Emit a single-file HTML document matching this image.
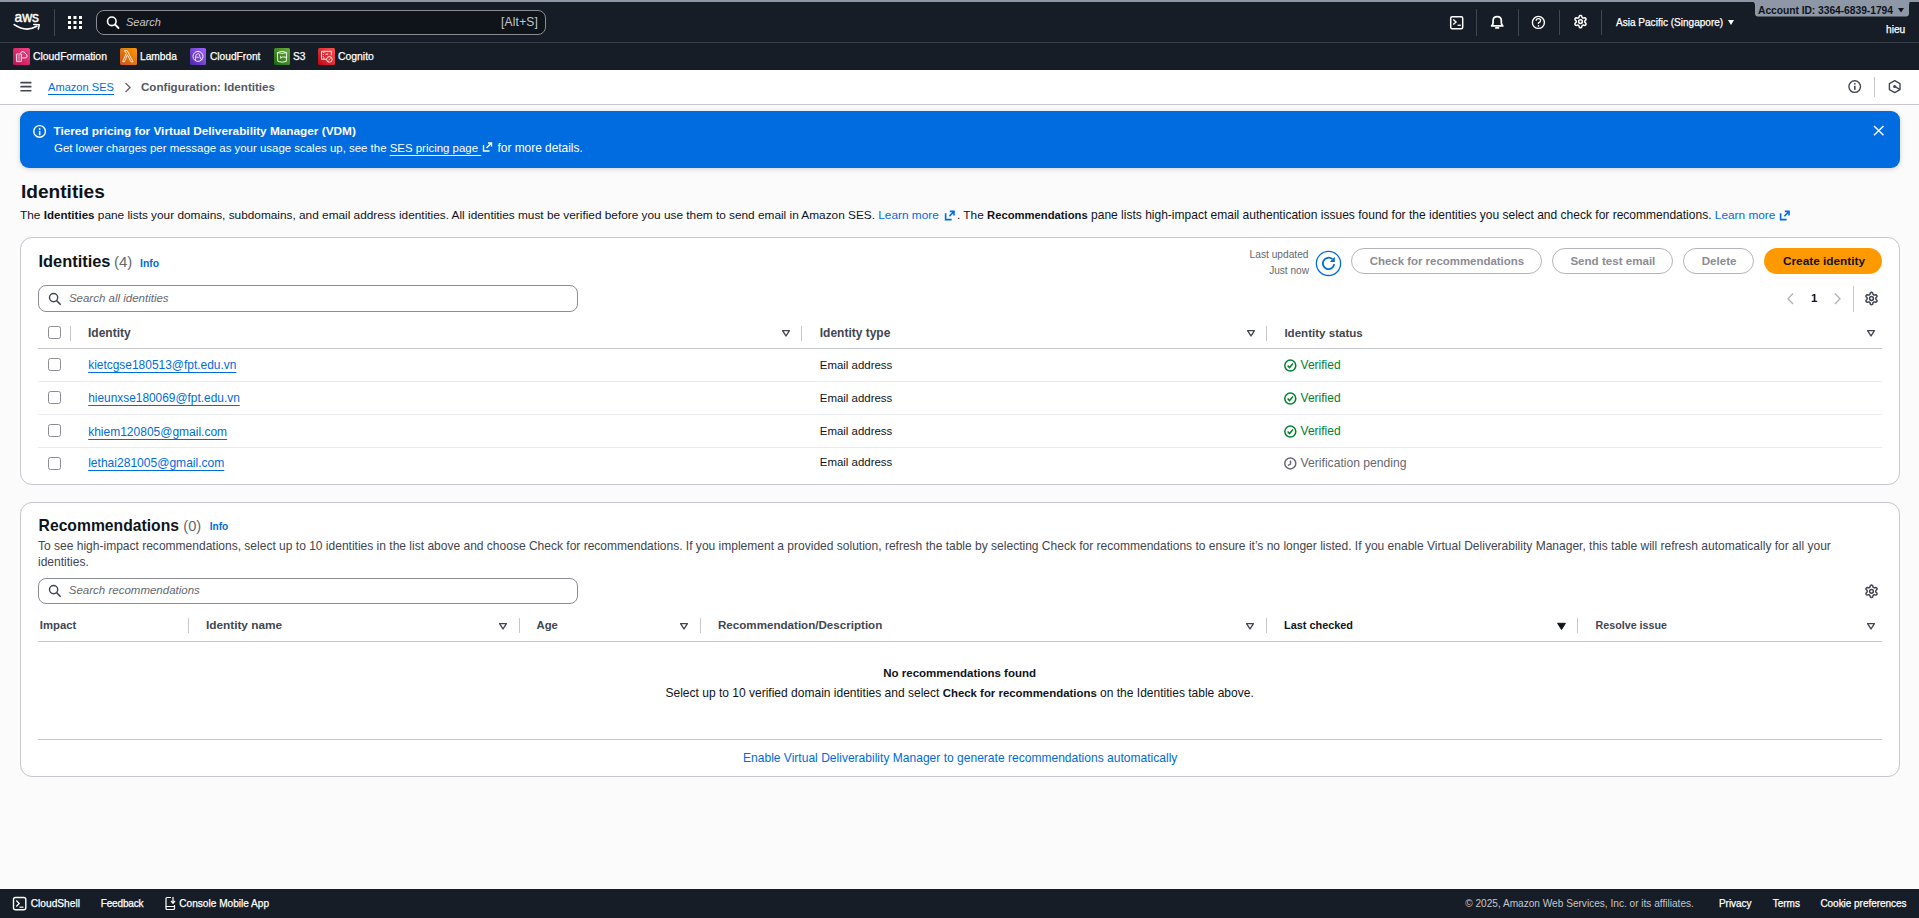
<!DOCTYPE html>
<html><head><meta charset="utf-8">
<style>
*{box-sizing:border-box;margin:0;padding:0}
html,body{width:1919px;height:918px;overflow:hidden}
body{font-family:"Liberation Sans",sans-serif;font-size:12px;color:#0f141a;background:#fbfbfc;position:relative}
.a{position:absolute;white-space:nowrap;line-height:1}
.lnk{color:#006ce0}
.u{text-decoration:underline;text-underline-offset:3px}
b{font-weight:bold}
svg{position:absolute;overflow:visible}
.wt{-webkit-text-stroke:0.25px #fff}
</style></head><body>

<svg style="left:0;top:0;width:0;height:0"><defs><g id="gear"><path d="M4.20 -0.00 L4.30 -0.45 L4.60 -0.98 L5.42 -1.76 L5.55 -2.47 L5.37 -3.10 L4.92 -3.57 L4.23 -3.81 L3.15 -3.50 L2.54 -3.49 L2.10 -3.64 L1.76 -3.95 L1.45 -4.48 L1.18 -5.57 L0.64 -6.05 L0.00 -6.20 L-0.64 -6.05 L-1.18 -5.57 L-1.45 -4.48 L-1.76 -3.95 L-2.10 -3.64 L-2.54 -3.49 L-3.15 -3.50 L-4.23 -3.81 L-4.92 -3.57 L-5.37 -3.10 L-5.55 -2.47 L-5.42 -1.76 L-4.60 -0.98 L-4.30 -0.45 L-4.20 -0.00 L-4.30 0.45 L-4.60 0.98 L-5.42 1.76 L-5.55 2.47 L-5.37 3.10 L-4.92 3.57 L-4.23 3.81 L-3.15 3.50 L-2.54 3.49 L-2.10 3.64 L-1.76 3.95 L-1.45 4.48 L-1.18 5.57 L-0.64 6.05 L-0.00 6.20 L0.64 6.05 L1.18 5.57 L1.45 4.48 L1.76 3.95 L2.10 3.64 L2.54 3.49 L3.15 3.50 L4.23 3.81 L4.92 3.57 L5.37 3.10 L5.55 2.47 L5.42 1.76 L4.60 0.98 L4.30 0.45 Z" stroke-width="1.5" fill="none" stroke-linejoin="round"/><circle cx="0" cy="0" r="1.9" stroke-width="1.5" fill="none"/></g></defs></svg>
<!-- top strip -->
<div class="a" style="left:0;top:0;width:1919px;height:2px;background:#8d97a5"></div>
<!-- header -->
<div class="a" style="left:0;top:2px;width:1919px;height:40px;background:#161d26"></div>
<div class="a" style="left:0;top:42px;width:1919px;height:1px;background:#3a414a"></div>
<div class="a" style="left:0;top:43px;width:1919px;height:27px;background:#161d26"></div>
<!-- breadcrumb bar -->
<div class="a" style="left:0;top:70px;width:1919px;height:34px;background:#ffffff"></div>
<div class="a" style="left:0;top:104px;width:1919px;height:1px;background:#c6c6cd"></div>


<!-- aws logo -->
<svg style="left:0;top:0" width="60" height="42">
<text x="14.5" y="22.3" font-family="Liberation Sans" font-size="15" fill="#fff" textLength="24.5" lengthAdjust="spacingAndGlyphs" stroke="#fff" stroke-width="0.45">aws</text>
<path d="M14.2 24.6 Q26 32.5 36.8 26.3" stroke="#fff" stroke-width="1.7" fill="none" stroke-linecap="round"/>
<path d="M33.8 24.6 L39.3 24.8 L38.3 29" stroke="#fff" stroke-width="1.5" fill="none" stroke-linecap="round" stroke-linejoin="round"/>
</svg>
<div class="a" style="left:54px;top:9px;width:1px;height:27px;background:#424650"></div>
<!-- grid -->
<svg style="left:0;top:0" width="90" height="42" fill="#fff">
<rect x="68" y="16" width="3" height="3"/><rect x="73.5" y="16" width="3" height="3"/><rect x="79" y="16" width="3" height="3"/>
<rect x="68" y="21" width="3" height="3"/><rect x="73.5" y="21" width="3" height="3"/><rect x="79" y="21" width="3" height="3"/>
<rect x="68" y="26" width="3" height="3"/><rect x="73.5" y="26" width="3" height="3"/><rect x="79" y="26" width="3" height="3"/>
</svg>
<!-- search -->
<div class="a" style="left:96px;top:10px;width:450px;height:25px;background:#0f141a;border:1px solid #8c8c94;border-radius:8px"></div>
<svg style="left:0;top:0" width="130" height="42"><circle cx="111.8" cy="21.3" r="4.3" stroke="#fff" stroke-width="1.6" fill="none"/><path d="M115 24.5 L118.5 28" stroke="#fff" stroke-width="1.8" stroke-linecap="round"/></svg>
<div class="a" style="left:126px;top:17px;font-size:11px;font-style:italic;color:#c6c6cd">Search</div>
<div class="a" style="left:501px;top:15.5px;font-size:12px;color:#c6c6cd;letter-spacing:0.2px">[Alt+S]</div>

<!-- right icons -->
<svg style="left:0;top:0" width="1919" height="42">
<rect x="1450.7" y="16.7" width="12" height="12" rx="1.5" stroke="#fff" stroke-width="1.5" fill="none"/>
<path d="M1453.3 19.6 L1456 22 L1453.3 24.4" stroke="#fff" stroke-width="1.4" fill="none"/>
<rect x="1457.6" y="24.6" width="3.2" height="1.3" fill="#fff"/>
<path d="M1491.6 25.9 L1502.8 25.9 Q1501.3 24.6 1501.3 22.4 L1501.3 20.6 Q1501.3 16.7 1497.2 16.7 Q1493.1 16.7 1493.1 20.6 L1493.1 22.4 Q1493.1 24.6 1491.6 25.9 Z" stroke="#fff" stroke-width="1.75" fill="none" stroke-linejoin="round"/>
<path d="M1495.9 27.9 L1498.5 27.9" stroke="#fff" stroke-width="1.8" stroke-linecap="round"/>
<circle cx="1538.4" cy="22.4" r="6" stroke="#fff" stroke-width="1.4" fill="none"/>
<path d="M1536.2 20.8 Q1536.2 18.7 1538.4 18.7 Q1540.6 18.7 1540.6 20.6 Q1540.6 22 1538.5 22.8 L1538.5 24" stroke="#fff" stroke-width="1.3" fill="none"/>
<circle cx="1538.5" cy="25.9" r="0.8" fill="#fff"/>
<use href="#gear" x="1580.5" y="21.6" stroke="#fff"/>
<rect x="1476" y="9" width="1" height="27" fill="#424650"/>
<rect x="1518" y="9" width="1" height="27" fill="#424650"/>
<rect x="1559" y="10" width="1" height="25" fill="#424650"/>
<rect x="1601" y="10" width="1" height="25" fill="#424650"/>
<path d="M1728 20 L1734 20 L1731 25 Z" fill="#fff"/>
</svg>
<div class="a wt" style="left:1616px;top:18px;font-size:10.05px;color:#fff">Asia Pacific (Singapore)</div>
<!-- account tab -->
<svg style="left:0;top:0" width="1919" height="20">
<path d="M1748 0 L1915 0 Q1909 0 1909 5 L1909 13.5 Q1909 16.5 1906 16.5 L1758 16.5 Q1755 16.5 1755 13.5 L1755 5 Q1755 1 1748 0 Z" fill="#8d97a5"/>
<path d="M1898 8 L1904 8 L1901 12.5 Z" fill="#0f141a"/>
</svg>
<div class="a" style="left:1758px;top:6px;font-size:10.3px;font-weight:bold;color:#0f141a;letter-spacing:-0.05px">Account ID: 3364-6839-1794</div>
<div class="a wt" style="left:1886px;top:25px;font-size:10.2px;color:#fff">hieu</div>

<!-- favorites -->
<svg style="left:0;top:0" width="400" height="70">
<defs>
<linearGradient id="gcf" x1="0" y1="1" x2="1" y2="0"><stop offset="0" stop-color="#bc1356"/><stop offset="1" stop-color="#f34482"/></linearGradient>
<linearGradient id="gla" x1="0" y1="1" x2="1" y2="0"><stop offset="0" stop-color="#c8511b"/><stop offset="1" stop-color="#ff9900"/></linearGradient>
<linearGradient id="gcr" x1="0" y1="1" x2="1" y2="0"><stop offset="0" stop-color="#4d27a8"/><stop offset="1" stop-color="#a166ff"/></linearGradient>
<linearGradient id="gs3" x1="0" y1="1" x2="1" y2="0"><stop offset="0" stop-color="#1b660f"/><stop offset="1" stop-color="#6cae3e"/></linearGradient>
<linearGradient id="gco" x1="0" y1="1" x2="1" y2="0"><stop offset="0" stop-color="#bd0816"/><stop offset="1" stop-color="#ff5252"/></linearGradient>
</defs>
<rect x="13" y="48" width="17" height="17" rx="1.5" fill="url(#gcf)"/>
<path d="M16.4 54 L21.6 54 L21.4 61.6 L16.6 61.6 Z" stroke="#fff" stroke-width="0.9" fill="none" opacity="0.9"/>
<path d="M17.5 56 L20.5 56 M17.5 58 L20.5 58 M17.5 60 L20.5 60" stroke="#fff" stroke-width="0.8" opacity="0.85"/>
<path d="M20.6 53.5 Q21 51.3 23 51.6 Q25 52.3 25.6 53.8 Q27.3 54.6 27 56.6 Q26.6 57.9 25.2 57.9 L21.7 57.9" stroke="#fff" stroke-width="0.9" fill="none"/>
<rect x="120" y="48" width="17" height="17" rx="1.5" fill="url(#gla)"/>
<path d="M124.6 50.6 L127.2 50.6 L133 61.8 L131 61.8 L127.4 54.8 L124.4 61.8 L122.6 61.8 L126.3 53.3 L125.3 51.4 L124.6 51.4 Z" stroke="#fff" stroke-width="0.8" fill="none" stroke-linejoin="round"/>
<rect x="190" y="48" width="16" height="17" rx="1.5" fill="url(#gcr)"/>
<circle cx="198" cy="56.4" r="5" stroke="#fff" stroke-width="1" fill="none" opacity="0.9"/>
<path d="M195.6 60.6 L195.6 56.3 Q196.2 53.6 198.3 53.6 Q200 54.2 199.6 56.2 L201.6 60.2 M195.6 56.8 L198.8 57.6" stroke="#fff" stroke-width="0.9" fill="none" opacity="0.9"/>
<rect x="274" y="48" width="16" height="17" rx="1.5" fill="url(#gs3)"/>
<path d="M277.4 52.6 Q282 50 286.6 52.6 L286.3 61.4 Q282 63 277.8 61.4 Z" stroke="#fff" stroke-width="0.9" fill="none" stroke-linejoin="round"/>
<path d="M277.4 52.6 Q282 54.4 286.6 52.6" stroke="#fff" stroke-width="0.8" fill="none"/>
<path d="M280.7 55.8 L280.7 58.3 L282.6 56.9 L287.2 57.4" stroke="#fff" stroke-width="0.9" fill="none"/>
<rect x="318" y="48" width="17" height="17" rx="1.5" fill="url(#gco)"/>
<path d="M326 59.3 L321.5 59.3 L321.5 51.3 L331.4 51.3 L331.4 55.2" stroke="#fff" stroke-width="0.9" fill="none"/>
<path d="M322.8 52.6 L324.5 52.6 M322.8 54.6 L323.8 54.6 M325.5 54.2 L328 54.2 M322.8 56.6 L323.8 56.6 M322.8 58.2 L324.8 58.2" stroke="#fff" stroke-width="0.8"/>
<circle cx="329.4" cy="59.4" r="2.8" stroke="#fff" stroke-width="0.9" fill="none"/>
<path d="M328.4 60.4 L330.4 58.4" stroke="#fff" stroke-width="0.8"/>
</svg>
<div class="a wt" style="left:33px;top:52px;font-size:10.4px;color:#fff">CloudFormation</div>
<div class="a wt" style="left:140px;top:52px;font-size:10.2px;color:#fff">Lambda</div>
<div class="a wt" style="left:210px;top:52px;font-size:10.2px;color:#fff">CloudFront</div>
<div class="a wt" style="left:293px;top:52px;font-size:10.2px;color:#fff">S3</div>
<div class="a wt" style="left:338px;top:52px;font-size:10.4px;color:#fff">Cognito</div>

<!-- breadcrumbs -->
<svg style="left:0;top:70px" width="300" height="34">
<rect x="20.3" y="11.7" width="11.2" height="1.7" rx="0.5" fill="#424650"/><rect x="20.3" y="15.7" width="11.2" height="1.7" rx="0.5" fill="#424650"/><rect x="20.3" y="19.9" width="11.2" height="1.7" rx="0.5" fill="#424650"/>
<path d="M125.5 13 L130 17.5 L125.5 22" stroke="#656871" stroke-width="1.4" fill="none"/>
</svg>
<div class="a lnk u" style="left:48px;top:81.7px;font-size:11.1px">Amazon SES</div>
<div class="a" style="left:141px;top:81px;font-size:11.6px;font-weight:bold;color:#545862">Configuration: Identities</div>


<!-- breadcrumb right icons -->
<svg style="left:0;top:0" width="1919" height="105">
<circle cx="1854.7" cy="86.6" r="5.8" stroke="#424650" stroke-width="1.4" fill="none"/>
<rect x="1854" y="85.8" width="1.6" height="4" fill="#424650"/><circle cx="1854.8" cy="83.8" r="0.9" fill="#424650"/>
<rect x="1874" y="77" width="1" height="20" fill="#c6c6cd"/>
<path d="M1894.7 80.6 L1900 83.6 L1900 89.6 L1894.7 92.6 L1889.4 89.6 L1889.4 83.6 Z" stroke="#424650" stroke-width="1.4" fill="none" stroke-linejoin="round"/>
<circle cx="1894.6" cy="86.4" r="1.5" fill="#424650"/><path d="M1894.6 86.4 L1899.8 89.4" stroke="#424650" stroke-width="1.3"/>
</svg>

<!-- flashbar -->
<div class="a" style="left:20px;top:111px;width:1880px;height:57px;background:#006ce0;border-radius:9px;box-shadow:0 1px 5px rgba(0,7,22,0.18)"></div>
<svg style="left:0;top:0" width="1919" height="170">
<circle cx="39.6" cy="131.4" r="5.8" stroke="#fff" stroke-width="1.4" fill="none"/>
<rect x="38.85" y="130.9" width="1.6" height="4.3" fill="#fff"/><circle cx="39.65" cy="129" r="0.9" fill="#fff"/>
<path d="M1874 126 L1883.5 135.3 M1883.5 126 L1874 135.3" stroke="#f2f3f3" stroke-width="1.6"/>
<path d="M483.5 145 L483.5 151 L489.5 151 M486.5 148 L491.5 143 M488 143 L491.5 143 L491.5 146.5" stroke="#fff" stroke-width="1.4" fill="none"/>
</svg>
<div class="a" style="left:53.4px;top:125.5px;font-size:11.8px;font-weight:bold;color:#fff">Tiered pricing for Virtual Deliverability Manager (VDM)</div>
<div class="a" style="left:54px;top:142.5px;font-size:11.45px;color:#fff">Get lower charges per message as your usage scales up, see the <span class="u">SES pricing page&nbsp;</span></div>
<div class="a" style="left:497.5px;top:142.5px;font-size:11.9px;color:#fff">for more details.</div>

<!-- page header -->
<div class="a" style="left:21px;top:182px;font-size:19.1px;font-weight:bold;color:#0f141a">Identities</div>
<div class="a" style="left:20px;top:209px;font-size:11.83px;color:#0f141a">The <b style="font-size:11.6px">Identities</b> pane lists your domains, subdomains, and email address identities. All identities must be verified before you use them to send email in Amazon SES. <span class="lnk">Learn more</span></div>
<div class="a" style="left:957px;top:209px;font-size:11.83px;color:#0f141a">. The <b style="font-size:11.26px">Recommendations</b><span style="font-size:12.02px"> pane lists high-impact email authentication issues found for the identities you select and check for recommendations. </span><span class="lnk">Learn more</span></div>
<svg style="left:0;top:0" width="1919" height="230">
<g id="ext" stroke="#006ce0" stroke-width="1.6" fill="none"><path d="M945.6 213.2 L945.6 219.6 L951.6 219.6"/><path d="M949.4 216.2 L953.8 211.6"/><path d="M949.8 211.4 L954 211.4 L954 215.6"/></g>
<use href="#ext" x="835"/>
</svg>

<!-- container 1 -->
<div class="a" style="left:20px;top:237px;width:1880px;height:248px;background:#fff;border:1px solid #c6c6cd;border-radius:12px"></div>
<div class="a" style="left:38.5px;top:253px;font-size:16.4px;font-weight:bold;color:#0f141a">Identities <span style="font-weight:normal;color:#656871;font-size:15px;margin-left:-1px">(4)</span></div>
<div class="a lnk" style="left:140px;top:258.5px;font-size:10.4px;font-weight:bold">Info</div>
<div class="a" style="left:1249.5px;top:249.5px;font-size:10.2px;color:#656871;text-align:right;width:59px">Last updated</div>
<div class="a" style="left:1249.5px;top:265.5px;font-size:10.1px;color:#656871;text-align:right;width:59.5px">Just now</div>

<svg style="left:0;top:0" width="1919" height="320">
<circle cx="1328.5" cy="263.4" r="12.1" stroke="#006ce0" stroke-width="1.3" fill="none"/>
<path d="M1334.2 264.2 A5.7 5.7 0 1 1 1332.4 259.2" stroke="#006ce0" stroke-width="1.8" fill="none"/>
<path d="M1334.8 256.8 L1334.8 261.9 L1329.8 261.9 Z" fill="#006ce0"/>
</svg>
<div class="a" style="left:1351px;top:248px;width:191px;height:26px;border:1px solid #b4b4bb;border-radius:14px"></div>
<div class="a" style="left:1369.7px;top:255.5px;font-size:11.44px;font-weight:bold;color:#8c8c94">Check for recommendations</div>
<div class="a" style="left:1552px;top:248px;width:121px;height:26px;border:1px solid #b4b4bb;border-radius:14px"></div>
<div class="a" style="left:1570.4px;top:255.5px;font-size:11.59px;font-weight:bold;color:#8c8c94">Send test email</div>
<div class="a" style="left:1683px;top:248px;width:71px;height:26px;border:1px solid #b4b4bb;border-radius:14px"></div>
<div class="a" style="left:1701.7px;top:254.8px;font-size:11.63px;font-weight:bold;color:#8c8c94">Delete</div>
<div class="a" style="left:1764px;top:248px;width:118px;height:26px;background:#ff9900;border-radius:14px"></div>
<div class="a" style="left:1783px;top:255.5px;font-size:11.81px;font-weight:bold;color:#0f141a">Create identity</div>

<div class="a" style="left:38px;top:285px;width:540px;height:27px;border:1px solid #8c8c94;border-radius:8px;background:#fff"></div>
<svg style="left:0;top:0" width="1919" height="360">
<circle cx="53.6" cy="297.6" r="4.1" stroke="#424650" stroke-width="1.4" fill="none"/><path d="M56.7 300.7 L60.2 304.2" stroke="#424650" stroke-width="1.6" stroke-linecap="round"/>
<path d="M1793 293.5 L1788 298.7 L1793 304" stroke="#b4b4bb" stroke-width="1.4" fill="none"/>
<path d="M1835 293.5 L1840 298.7 L1835 304" stroke="#b4b4bb" stroke-width="1.4" fill="none"/>
<rect x="1853" y="286" width="1" height="26" fill="#c6c6cd"/>
</svg>
<div class="a" style="left:68.9px;top:292.5px;font-size:11.5px;font-style:italic;color:#656871">Search all identities</div>
<div class="a" style="left:1811px;top:293px;font-size:11.5px;font-weight:bold;color:#0f141a">1</div>

<!-- table 1 -->
<div class="a" style="left:38px;top:348px;width:1844px;height:1px;background:#c6c6cd"></div>
<div class="a" style="left:38px;top:381px;width:1844px;height:1px;background:#ebebf0"></div>
<div class="a" style="left:38px;top:414px;width:1844px;height:1px;background:#ebebf0"></div>
<div class="a" style="left:38px;top:447px;width:1844px;height:1px;background:#ebebf0"></div>
<div class="a" style="left:48px;top:326px;width:13px;height:13px;border:1.2px solid #8c8c94;border-radius:2.5px"></div>
<div class="a" style="left:48px;top:358px;width:13px;height:13px;border:1.2px solid #8c8c94;border-radius:2.5px"></div>
<div class="a" style="left:48px;top:391px;width:13px;height:13px;border:1.2px solid #8c8c94;border-radius:2.5px"></div>
<div class="a" style="left:48px;top:424px;width:13px;height:13px;border:1.2px solid #8c8c94;border-radius:2.5px"></div>
<div class="a" style="left:48px;top:457px;width:13px;height:13px;border:1.2px solid #8c8c94;border-radius:2.5px"></div>
<svg style="left:0;top:0" width="1919" height="480">
<rect x="70" y="326" width="1" height="15" fill="#c6c6cd"/>
<rect x="801" y="326" width="1" height="15" fill="#c6c6cd"/>
<rect x="1266" y="326" width="1" height="15" fill="#c6c6cd"/>
<path d="M782.6 330.6 L789.4 330.6 L786 336 Z" stroke="#424650" stroke-width="1.4" fill="none" stroke-linejoin="round"/>
<path d="M1247.6 330.6 L1254.4 330.6 L1251 336 Z" stroke="#424650" stroke-width="1.4" fill="none" stroke-linejoin="round"/>
<path d="M1867.6 330.6 L1874.4 330.6 L1871 336 Z" stroke="#424650" stroke-width="1.4" fill="none" stroke-linejoin="round"/>
<g id="chk" stroke="#00802f" stroke-width="1.5" fill="none"><circle cx="1290.3" cy="365.6" r="5.5"/><path d="M1287.6 365.6 L1289.5 367.6 L1293 363.6"/></g>
<use href="#chk" y="33"/><use href="#chk" y="66"/>
<circle cx="1290.3" cy="463.4" r="5.5" stroke="#656871" stroke-width="1.5" fill="none"/><path d="M1290.5 460.4 L1290.5 464 L1287.8 465.5" stroke="#656871" stroke-width="1.4" fill="none"/>
</svg>
<div class="a" style="left:88px;top:327.3px;font-size:12px;font-weight:bold;color:#424650">Identity</div>
<div class="a" style="left:819.8px;top:328px;font-size:11.97px;font-weight:bold;color:#424650">Identity type</div>
<div class="a" style="left:1284.4px;top:328px;font-size:11.57px;font-weight:bold;color:#424650">Identity status</div>

<div class="a lnk u" style="left:88.2px;top:359.5px;font-size:11.95px">kietcgse180513@fpt.edu.vn</div>
<div class="a lnk u" style="left:88.2px;top:392.5px;font-size:11.9px">hieunxse180069@fpt.edu.vn</div>
<div class="a lnk u" style="left:88.2px;top:425.5px;font-size:12px">khiem120805@gmail.com</div>
<div class="a lnk u" style="left:88.2px;top:456.7px;font-size:12.05px">lethai281005@gmail.com</div>
<div class="a" style="left:819.8px;top:359.5px;font-size:11.44px">Email address</div>
<div class="a" style="left:819.8px;top:392.5px;font-size:11.44px">Email address</div>
<div class="a" style="left:819.8px;top:425.5px;font-size:11.44px">Email address</div>
<div class="a" style="left:819.8px;top:457px;font-size:11.44px">Email address</div>
<div class="a" style="left:1300.6px;top:358.8px;font-size:12px;color:#00802f">Verified</div>
<div class="a" style="left:1300.6px;top:391.8px;font-size:12px;color:#00802f">Verified</div>
<div class="a" style="left:1300.6px;top:424.8px;font-size:12px;color:#00802f">Verified</div>
<div class="a" style="left:1300.6px;top:456.8px;font-size:12.15px;color:#656871">Verification pending</div>

<!-- container 2 -->
<div class="a" style="left:20px;top:502px;width:1880px;height:275px;background:#fff;border:1px solid #c6c6cd;border-radius:12px"></div>
<div class="a" style="left:38.6px;top:517.5px;font-size:15.7px;font-weight:bold;color:#0f141a">Recommendations <span style="font-weight:normal;color:#656871;font-size:14.7px">(0)</span></div>
<div class="a lnk" style="left:209.7px;top:522px;font-size:10.1px;font-weight:bold">Info</div>
<div class="a" style="left:38px;top:538px;font-size:12.025px;color:#424650;white-space:normal;width:1820px;line-height:16px">To see high-impact recommendations, select up to 10 identities in the list above and choose Check for recommendations. If you implement a provided solution, refresh the table by selecting Check for recommendations to ensure it’s no longer listed. If you enable Virtual Deliverability Manager, this table will refresh automatically for all your identities.</div>
<div class="a" style="left:38px;top:578px;width:540px;height:26px;border:1px solid #8c8c94;border-radius:8px;background:#fff"></div>
<svg style="left:0;top:0" width="1919" height="780">
<circle cx="53.6" cy="589.6" r="4.1" stroke="#424650" stroke-width="1.4" fill="none"/><path d="M56.7 592.7 L60.2 596.2" stroke="#424650" stroke-width="1.6" stroke-linecap="round"/>
<rect x="188" y="618" width="1" height="15" fill="#c6c6cd"/>
<rect x="519" y="618" width="1" height="15" fill="#c6c6cd"/>
<rect x="700" y="618" width="1" height="15" fill="#c6c6cd"/>
<rect x="1266" y="618" width="1" height="15" fill="#c6c6cd"/>
<rect x="1577" y="618" width="1" height="15" fill="#c6c6cd"/>
<path d="M499.6 623.6 L506.4 623.6 L503 629 Z" stroke="#424650" stroke-width="1.4" fill="none" stroke-linejoin="round"/>
<path d="M680.6 623.6 L687.4 623.6 L684 629 Z" stroke="#424650" stroke-width="1.4" fill="none" stroke-linejoin="round"/>
<path d="M1246.6 623.6 L1253.4 623.6 L1250 629 Z" stroke="#424650" stroke-width="1.4" fill="none" stroke-linejoin="round"/>
<path d="M1557.6 623.3 L1565.4 623.3 L1561.5 629.5 Z" stroke="#0f141a" stroke-width="1" fill="#0f141a" stroke-linejoin="round"/>
<path d="M1867.6 623.6 L1874.4 623.6 L1871 629 Z" stroke="#424650" stroke-width="1.4" fill="none" stroke-linejoin="round"/>
</svg>
<div class="a" style="left:68.8px;top:585px;font-size:11.5px;font-style:italic;color:#656871">Search recommendations</div>
<div class="a" style="left:39.8px;top:620px;font-size:11.3px;font-weight:bold;color:#424650">Impact</div>
<div class="a" style="left:205.9px;top:620px;font-size:11.84px;font-weight:bold;color:#424650">Identity name</div>
<div class="a" style="left:536.5px;top:620px;font-size:11.3px;font-weight:bold;color:#424650">Age</div>
<div class="a" style="left:718px;top:619px;font-size:11.6px;font-weight:bold;color:#424650">Recommendation/Description</div>
<div class="a" style="left:1284px;top:620px;font-size:10.9px;font-weight:bold;color:#0f141a">Last checked</div>
<div class="a" style="left:1595.6px;top:620px;font-size:10.7px;font-weight:bold;color:#424650">Resolve issue</div>
<div class="a" style="left:38px;top:641px;width:1844px;height:1px;background:#c6c6cd"></div>
<div class="a" style="left:883.3px;top:668px;font-size:11.5px;font-weight:bold;color:#0f141a">No recommendations found</div>
<div class="a" style="left:665.5px;top:687.3px;font-size:12.02px;color:#0f141a">Select up to 10 verified domain identities and select <b style="font-size:11.42px">Check for recommendations</b> on the Identities table above.</div>
<div class="a" style="left:38px;top:739px;width:1844px;height:1px;background:#c6c6cd"></div>
<div class="a lnk" style="left:743px;top:752px;font-size:12.05px">Enable Virtual Deliverability Manager to generate recommendations automatically</div>

<!-- footer -->
<div class="a" style="left:0;top:889px;width:1919px;height:29px;background:#161d26"></div>


<svg style="left:0;top:0" width="1919" height="918">
<rect x="13.5" y="897.5" width="12.3" height="12.3" rx="2" stroke="#fff" stroke-width="1.4" fill="none"/>
<path d="M16.3 900.5 L19.2 903.5 L16.3 906.5" stroke="#fff" stroke-width="1.3" fill="none"/><path d="M19.5 907.2 L23.5 907.2" stroke="#fff" stroke-width="1.2"/>
<path d="M171 897.5 L167 897.5 Q166 897.5 166 898.5 L166 908.5 Q166 909.5 167 909.5 L173.5 909.5 Q174.5 909.5 174.5 908.5 L174.5 905" stroke="#fff" stroke-width="1.2" fill="none"/>
<path d="M166 906.5 L174.5 906.5" stroke="#fff" stroke-width="1"/>
<path d="M173 897 L173 903 M171 901 L173 903.3 L175 901" stroke="#fff" stroke-width="1.2" fill="none"/>
</svg>
<div class="a wt" style="left:30.7px;top:898.5px;font-size:10.2px;color:#fff">CloudShell</div>
<div class="a wt" style="left:100.7px;top:898.5px;font-size:10px;letter-spacing:-0.15px;color:#fff">Feedback</div>
<div class="a wt" style="left:179.3px;top:898.5px;font-size:10.1px;color:#fff">Console Mobile App</div>
<div class="a" style="left:1465.2px;top:898.5px;font-size:10.1px;color:#c6c6cd">© 2025, Amazon Web Services, Inc. or its affiliates.</div>
<div class="a wt" style="left:1719px;top:898.5px;font-size:10px;letter-spacing:-0.05px;color:#fff">Privacy</div>
<div class="a wt" style="left:1772.7px;top:898.5px;font-size:10px;color:#fff">Terms</div>
<div class="a wt" style="left:1820.4px;top:898.5px;font-size:10px;letter-spacing:-0.03px;color:#fff">Cookie preferences</div>

<svg style="left:0;top:0" width="1919" height="918">
<use href="#gear" x="1871.5" y="298.5" stroke="#424650"/>
<use href="#gear" x="1871.5" y="591.3" stroke="#424650"/>
</svg>
</body></html>
